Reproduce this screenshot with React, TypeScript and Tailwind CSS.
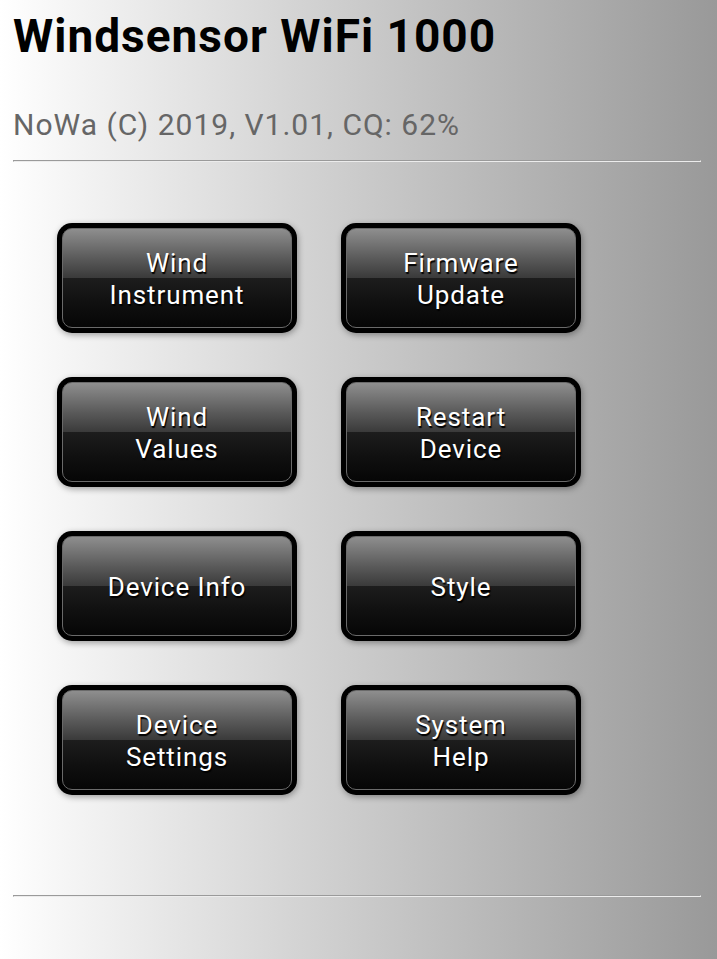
import React from 'react';

const BUTTONS: string[][] = [
  ['Wind', 'Instrument'],
  ['Firmware', 'Update'],
  ['Wind', 'Values'],
  ['Restart', 'Device'],
  ['Device Info'],
  ['Style'],
  ['Device', 'Settings'],
  ['System', 'Help'],
];

const Rule: React.FC = () => (
  <div className="h-0 border border-t-[#9a9a9a] border-l-[#9a9a9a] border-b-[#ececec] border-r-[#ececec]" />
);

const MenuButton: React.FC<{ lines: string[] }> = ({ lines }) => (
  <div className="h-[110px] w-[240px] rounded-[15px] bg-black p-[5px] shadow-[1px_2px_6px_rgba(0,0,0,0.35)]">
    <div className="flex h-full flex-col items-center justify-center rounded-[10px] border border-[#6a6a6a] bg-[linear-gradient(to_bottom,#8e8e8e_0%,#5a5a5a_30%,#3a3a3a_50%,#1d1d1d_50%,#101010_75%,#060606_100%)] pt-[1px] text-center text-[26px] leading-[32px] tracking-[0.9px] text-white [text-shadow:1px_2px_1px_#000]">
      {lines.map((l, i) => (
        <span key={i}>{l}</span>
      ))}
    </div>
  </div>
);

export default function App() {
  return (
    <div className="min-h-screen bg-linear-to-r from-white to-[#999] pl-[13px] pr-[16px] pt-[10px] font-['Roboto',sans-serif]">
      <h1 className="text-[46px] font-bold leading-[52px] tracking-[1px] text-black">Windsensor WiFi 1000</h1>
      <p className="mt-[45px] text-[30px] leading-[36px] tracking-[1px] text-[#666]">NoWa (C) 2019, V1.01, CQ: 62%</p>
      <div className="mt-[17px]">
        <Rule />
      </div>

      <div className="ml-[44px] mt-[61px] grid grid-cols-[240px_240px] gap-x-[44px] gap-y-[44px]">
        {BUTTONS.map((b, i) => (
          <MenuButton key={i} lines={b} />
        ))}
      </div>

      <div className="mt-[100px]">
        <Rule />
      </div>
    </div>
  );
}
